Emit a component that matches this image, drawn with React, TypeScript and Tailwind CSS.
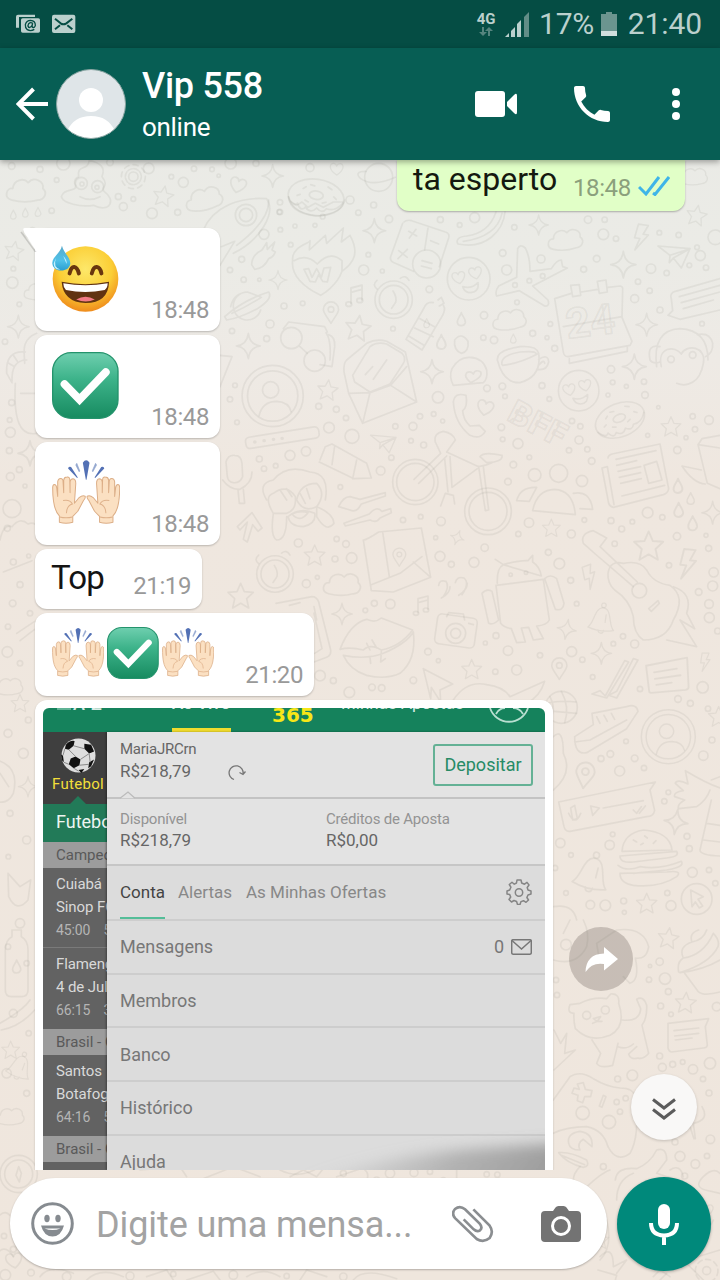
import React from "react";

type Spot = [number, number, number];
type Place = { x: number; y: number; s?: number; r?: number };

const at = ({ x, y, s = 1, r = 0 }: Place) => `translate(${x} ${y}) rotate(${r}) scale(${s})`;

const Star = (p: Place) => (
  <path transform={at(p)} d="M0-38 11-13 38-11 18 8 24 36 0 22-24 36-18 8-38-11-11-13Z" />
);
const Spark = (p: Place) => (
  <path transform={at(p)} d="M0-38Q4-4 36 0 4 4 0 38-4 4-36 0-4-4 0-38Z" />
);
const Cloud = (p: Place) => (
  <path transform={at(p)} d="M-38 26C-62 20-54-8-36-6-34-30-6-36 6-22 22-40 50-26 46-6 60 6 50 26 32 26 10 32-16 32-38 26Z" />
);
const Heart = (p: Place) => (
  <path transform={at(p)} d="M0 24C-34 2-26-22-10-20-2-19 0-10 0-10S4-20 14-19C30-16 28 6 0 24Z" />
);
const Drop = (p: Place) => <path transform={at(p)} d="M0-20C4-8 14 0 12 10 8 22-10 22-12 10-14 0-4-8 0-20Z" />;
const Bolt = (p: Place) => <path transform={at(p)} d="M-14-38H16L4-10H20L-14 40-4 4H-20Z" />;
const Pin = (p: Place) => (
  <g transform={at(p)}>
    <path d="M0 36C-14 12-24 4-24-8A24 24 0 0 1 24-8C24 4 12 14 0 36Z" />
    <circle cy="-8" r="9" />
  </g>
);
const Bell = (p: Place) => (
  <g transform={at(p)}>
    <circle cy="-56" r="9" />
    <path d="M-52 38C-28 20-36-46 0-46S28 20 52 38C20 48-20 48-52 38ZM-10 44C-8 60 12 60 12 43M14-20V10" />
  </g>
);
const Note = (p: Place) => (
  <g transform={at(p)}>
    <path d="M-10 22V-20L20-28V12M-10-8 20-16" />
    <ellipse cx="-16" cy="24" rx="8" ry="6" />
    <ellipse cx="14" cy="14" rx="8" ry="6" />
  </g>
);
const Plane = (p: Place) => <path transform={at(p)} d="M-48-28 48-20 22 38-2 8-14 22-12 0ZM-12 0 48-20-2 8" />;
const Smile = (p: Place) => (
  <g transform={at(p)}>
    <circle r="64" />
    <Heart x={-30} y={-4} s={0.8} r={-12} />
    <Heart x={20} y={-18} s={0.8} r={-12} />
    <path d="M-18 24Q8 32 28 12 32 40 6 42-12 42-18 24Z" />
  </g>
);
const Avatar = (p: Place) => (
  <g transform={at(p)}>
    <circle r="90" />
    <circle r="74" />
    <circle cx="-6" cy="-18" r="24" />
    <path d="M-40 58Q-30 16 12 16 48 18 54 46" />
  </g>
);
const Donut = (p: Place) => (
  <g transform={at(p)}>
    <ellipse rx="80" ry="52" />
    <path d="M-78 10Q-60 38-50 24-38 48-26 32-8 50 6 30 24 46 34 28 60 34 78 6M-40-20-32-26M-20-34-8-32M30-34 42-28M50-8 58-2M-54 2-46-2M-30 12-20 16M20 14 30 10" />
    <ellipse cy="-6" rx="20" ry="12" />
  </g>
);
const Clock = (p: Place) => (
  <g transform={at(p)}>
    <circle r="56" />
    <circle r="43" />
    <path d="M-2-26Q10-8 6 8L-6 26M20-64Q36-76 46-58M-50-32Q-66-44-50-58" />
  </g>
);
const Bubble = (p: Place) => (
  <g transform={at(p)}>
    <path d="M-58-28 54-50 58 30Q58 36 50 38L-44 46Q-50 46-50 38ZM-36-10 26-20M-34 8 36-2M-30 24 12 18" />
  </g>
);
const Dots = ({ list }: { list: Spot[] }) => (
  <>
    {list.map(([x, y, r], i) => (
      <circle key={i} cx={x} cy={y} r={r} />
    ))}
  </>
);

const headDots: Spot[] = [[35, 498, 10], [120, 508, 9], [190, 490, 20], [170, 540, 7], [330, 487, 10], [446, 505, 16], [514, 530, 7], [550, 547, 15], [582, 506, 8], [636, 508, 7], [656, 527, 5], [692, 490, 17], [768, 490, 9], [930, 503, 12], [355, 590, 9], [400, 597, 7], [456, 640, 16], [533, 637, 9], [370, 620, 12], [155, 632, 8], [840, 607, 8], [838, 636, 7], [968, 650, 7], [1050, 600, 12]];

const midDots: Spot[] = [[78, 45, 32], [78, 45, 20], [180, 36, 8], [132, 103, 15], [181, 89, 7], [225, 78, 6], [285, 76, 6], [415, 38, 8], [507, 57, 11], [461, 15, 9], [212, 134, 7], [65, 178, 9], [30, 210, 8], [71, 239, 8], [118, 239, 5], [445, 164, 7], [431, 210, 15], [487, 213, 6], [192, 318, 9], [248, 310, 7], [150, 372, 12], [140, 416, 9], [36, 393, 8], [519, 386, 7], [628, 268, 10], [661, 59, 9], [719, 75, 7], [764, 53, 15], [883, 82, 8], [848, 159, 10], [860, 210, 15], [963, 177, 12], [968, 228, 7], [928, 242, 7], [885, 255, 7], [891, 307, 7], [792, 346, 11], [991, 372, 7], [938, 400, 9], [981, 413, 6], [1004, 445, 9], [822, 420, 11], [790, 413, 8], [1104, 59, 11], [1154, 59, 8], [1150, 103, 16], [1188, 116, 8], [1130, 176, 10], [1091, 208, 9], [1293, 206, 14], [1254, 245, 8], [1289, 272, 8], [1244, 296, 12], [1318, 98, 7], [1376, 105, 8], [1431, 142, 7], [1441, 167, 15], [1408, 196, 7], [1340, 219, 8], [1458, 203, 8], [1320, 330, 9], [1446, 371, 7], [1486, 112, 22], [45, 556, 7], [30, 598, 8], [296, 619, 9], [349, 628, 9], [378, 654, 8], [51, 667, 7], [327, 683, 16], [526, 679, 8], [579, 679, 12], [654, 592, 17], [600, 649, 8], [641, 642, 7], [668, 663, 6], [801, 565, 10], [847, 559, 10], [855, 589, 7], [966, 557, 9], [988, 597, 7], [844, 682, 10], [848, 718, 7], [894, 731, 15], [880, 794, 10], [928, 772, 7], [864, 845, 10], [1047, 751, 8], [1077, 720, 12], [1102, 748, 8], [1115, 783, 10], [1056, 663, 8], [1081, 679, 8], [1173, 508, 11], [1178, 547, 7], [1219, 559, 6], [1272, 545, 8], [1275, 585, 10], [1164, 585, 6], [1315, 622, 5], [1418, 649, 8], [1467, 660, 13], [1425, 688, 8], [1398, 713, 6], [1372, 750, 11], [1283, 706, 6], [118, 777, 9], [132, 806, 8], [167, 797, 7], [210, 766, 15], [258, 754, 14], [482, 812, 13], [514, 773, 8], [573, 722, 7], [611, 735, 9], [361, 861, 7], [602, 950, 7], [549, 960, 8], [663, 964, 13], [647, 1013, 6], [927, 968, 14], [895, 1002, 8], [1054, 1002, 12], [1093, 960, 7], [1173, 962, 9], [1205, 987, 9], [1237, 965, 7], [1283, 938, 16], [1327, 952, 8], [1371, 1009, 11], [1458, 1006, 6], [1466, 1045, 9], [235, 1029, 12], [350, 1017, 8], [378, 1032, 10], [345, 1077, 9], [395, 1074, 16], [794, 1043, 11], [660, 1069, 15], [694, 1093, 9], [762, 1087, 15], [985, 1057, 9], [1018, 1091, 16], [1184, 1031, 8], [1347, 1096, 8], [1481, 1117, 14]];

const lowDots: Spot[] = [[259, 131, 12], [292, 112, 6], [511, 192, 14], [463, 190, 9], [436, 211, 7], [624, 335, 10], [655, 362, 6], [828, 287, 9], [796, 309, 6], [864, 332, 14], [960, 346, 8], [890, 390, 15], [826, 395, 8], [580, 421, 10], [388, 457, 16], [300, 407, 16], [340, 422, 9], [456, 442, 10], [485, 444, 10], [1070, 191, 7], [1052, 121, 9], [1209, 289, 8], [1244, 312, 12], [1180, 311, 7], [1055, 335, 15], [1087, 359, 8], [1118, 411, 7], [1436, 156, 10], [1478, 138, 15], [1467, 192, 13], [1468, 233, 15], [1493, 273, 9], [1448, 442, 17], [1260, 447, 8], [1374, 477, 10], [1411, 490, 9], [1464, 506, 8], [1218, 604, 7], [1244, 655, 10], [1171, 642, 10], [1143, 656, 9], [1199, 693, 15], [1272, 684, 8], [1476, 600, 9], [1450, 647, 14], [1345, 757, 7], [1333, 784, 8], [1401, 889, 9], [1408, 926, 9], [1178, 883, 7], [1169, 915, 14], [1021, 909, 14], [1053, 945, 7], [1005, 984, 8], [1417, 997, 15], [1467, 990, 8], [1342, 1059, 8], [1211, 1083, 9], [1156, 1096, 16], [1111, 1094, 13], [1353, 1097, 15], [1213, 1117, 6], [1038, 1059, 7], [1486, 1030, 8]];

const deepDots: Spot[] = [[1109, 95, 11], [1080, 108, 5], [1077, 149, 8], [1125, 146, 17], [1135, 185, 9], [1112, 228, 9], [1143, 253, 7], [1280, 230, 13], [801, 195, 8], [798, 150, 8], [1109, 378, 9], [1117, 412, 12], [1148, 403, 9], [1178, 396, 7], [1209, 418, 14], [1260, 400, 17], [1239, 447, 8], [1257, 489, 9], [1027, 436, 16], [983, 447, 9], [980, 516, 8], [1007, 505, 8], [990, 545, 8], [957, 576, 20], [878, 549, 20], [1261, 628, 13], [1155, 636, 9], [1170, 679, 15], [1216, 702, 13], [1251, 678, 8], [940, 710, 9], [1184, 738, 9], [590, 733, 8], [622, 734, 8], [160, 730, 9], [372, 728, 12]];

const leftDots: Spot[] = [[37, 188, 17], [58, 253, 7], [40, 146, 7], [15, 365, 8], [35, 548, 9], [29, 600, 7], [31, 637, 15], [28, 692, 9], [58, 749, 9], [31, 770, 12], [75, 798, 6], [22, 925, 9], [40, 1026, 9], [86, 1008, 6], [60, 1094, 9], [38, 1150, 10], [90, 1180, 8], [24, 1220, 8], [22, 1296, 16], [60, 1330, 8], [85, 1500, 9], [24, 1540, 12], [70, 1600, 15], [30, 1780, 9], [80, 1860, 12], [25, 1910, 7], [60, 2110, 14], [24, 2180, 8], [80, 2230, 8], [40, 2380, 12], [86, 2440, 8], [20, 2560, 14], [80, 2620, 9]];

const footDots: Spot[] = [[12, 228, 8], [40, 268, 9], [16, 345, 16], [93, 338, 10], [200, 350, 13], [390, 348, 12], [520, 342, 8], [700, 345, 13], [860, 348, 8], [1030, 350, 11], [1092, 245, 8], [1100, 290, 12], [1130, 60, 9], [1170, 40, 14], [1290, 35, 8], [1330, 60, 7], [1410, 210, 9], [1425, 120, 8], [1400, 265, 12]];

function Wallpaper() {
  return (
    <svg className="absolute inset-0" width="720" height="1280" viewBox="0 0 720 1280" fill="none" stroke="#87837b" strokeOpacity="0.115" strokeLinejoin="round" strokeLinecap="round">
      <g transform="scale(.33333)" strokeWidth="5">
        <Dots list={headDots} />
        <Cloud x={78} y={572} s={1.1} />
        <Cloud x={612} y={598} s={1.05} r={-12} />
        <g transform="translate(400 530)">
          <circle r="14" />
          <circle r="24" strokeDasharray="14 5" />
          <circle r="36" strokeDasharray="15 13" />
        </g>
        <path d="M236 530C230 490 264 516 268 480 300 490 318 500 306 530 330 560 300 560 312 574 350 600 330 640 280 616 240 622 190 610 184 590 190 560 240 580 224 550Q222 536 236 530ZM240 590Q270 606 300 590" />
        <circle cx="244" cy="550" r="18" />
        <circle cx="293" cy="560" r="18" />
        <circle cx="246" cy="552" r="6" />
        <circle cx="291" cy="562" r="6" />
        <Star x={490} y={588} s={0.8} r={10} />
        <Heart x={714} y={554} s={1} r={15} />
        <Heart x={1010} y={506} s={0.8} />
        <Spark x={818} y={528} s={0.9} />
        <Donut x={948} y={592} s={1.05} r={8} />
        <path d="M610 690C640 620 720 590 800 596 830 640 780 720 700 760" />
        <Drop x={40} y={644} s={0.7} />
        <Drop x={76} y={638} s={0.7} />
        <Drop x={114} y={636} s={0.7} />
        <circle cx="1136" cy="532" r="42" />
        <path d="M1098 514Q1060 514 1082 536 1120 562 1186 532" />
        <Cloud x={2080} y={530} s={0.8} />
      </g>

      <g transform="translate(0 220) scale(.33333)" strokeWidth="5">
        <Dots list={leftDots} />
        <Star x={42} y={92} s={0.75} r={10} />
        <Cloud x={115} y={215} s={0.8} />
        <Spark x={55} y={320} s={0.9} />
        <Heart x={90} y={40} s={0.8} r={-18} />
        <path d="M110 340C60 360 74 400 74 430M20 460Q16 390 76 396M36 484Q34 420 80 420M20 460 36 488M26 430 44 440M40 406 52 424M46 490C40 600 60 650 110 640M62 520H110" />
        <Spark x={90} y={700} s={1} />
        <circle cx="36" cy="866" r="27" />
        <path d="M0 960Q10 910 36 920 60 890 84 912 110 900 120 940" />
        <path d="M10 1056 96 1022M50 1240 104 1204M60 1262 104 1228" />
        <Cloud x={26} y={1400} s={0.8} />
        <Star x={60} y={1450} s={0.7} />
        <path d="M-10 1620Q60 1640 40 1720 20 1760-20 1740M0 1660 26 1700" />
        <Spark x={84} y={1700} s={0.8} />
        <path d="M24 1960 60 2000 92 1980 84 2040Q50 2080 26 2030Z" />
        <path d="M36 2150V2130H64V2150Q84 2160 84 2190V2310Q84 2330 64 2330H34Q16 2330 16 2310V2190Q16 2160 36 2150Z" />
        <Drop x={50} y={2240} s={1} />
        <Bell x={60} y={2540} s={0.7} r={20} />
        <Star x={32} y={2490} s={0.7} />
        <path d="M0 2410Q70 2370 90 2340M4 2430Q60 2420 104 2370" />
        <Cloud x={30} y={2690} s={0.8} />
      </g>

      <g transform="translate(220 200) scale(.33333)" strokeWidth="5">
        <Dots list={midDots} />
        <path d="M146 0Q150 60 50 136M206-10Q210 40 290 48 370 40 374 0M212 4 230 16 246 6 264 22 286 10 310 22 340 6 372 6" />
        <path d="M95 194Q96 164 126 150L140 128 142 148 164 126 156 150 166 156Q160 172 146 176 132 206 104 208Z" />
        <path d="M0 196 44 124 4 140M0 466 36 470 0 560" />
        <path d="M302 286Q210 240 218 180C214 140 270 130 270 122L268 150 316 106 320 130 370 84 364 126 390 106C420 160 400 190 366 214 350 260 302 286 302 286ZM222 182Q260 160 292 192 330 150 366 182V214M252 208 266 206 276 232 290 206 304 232 312 204 332 202M252 208 270 244 286 246 296 224 308 244 322 246 332 202" />
        <Spark x={463} y={92} s={0.95} />
        <Spark x={174} y={240} s={0.75} />
        <path d="M552 66Q560 58 575 62L676 96Q690 100 686 114L658 200M580 214 526 190Q508 184 512 170L548 70M566 94 590 108M588 88 568 114M536 152 562 172M562 148 534 176M632 122 656 132M624 84 614 150" />
        <circle cx="620" cy="192" r="42" />
        <path d="M606 182 636 190M604 198 634 206" />
        <path d="M855 36C850 90 800 150 714 132 706 120 716 110 740 108 800 100 820 60 828 36M846 40Q830 110 730 124" />
        <Smile x={746} y={236} />
        <path d="M893 146Q900 130 916 144 930 170 930 214L994 206Q1010 180 1024 180L1028 200 1042 204 938 258 984 300Q990 320 974 318L898 272 830 288Q824 274 836 258L890 232Z" />
        <Cloud x={1036} y={120} s={0.98} r={-4} />
        <Cloud x={868} y={360} s={0.95} r={-6} />
        <Spark x={956} y={75} s={0.8} />
        <Spark x={1210} y={194} s={1.05} />
        <Bolt x={1264} y={112} r={8} />
        <Plane x={1362} y={166} />
        <Star x={1430} y={46} s={0.8} r={10} />
        <path d="M1500 236 1366 274Q1348 280 1354 296L1358 332 1344 346 1380 358 1500 330M1378 290 1500 256M1384 308 1500 276M1390 326 1480 300" />
        <path d="M82 276A42 42 0 1 0 122 330M32 320Q40 280 82 276L120 290M14 350Q70 300 146 276 160 296 112 326 60 354 20 360ZM36 340Q80 320 124 292" />
        <Note x={404} y={286} s={1.1} />
        <Pin x={333} y={336} s={0.95} />
        <Clock x={521} y={299} />
        <path d="M654 300 664 292 672 310 658 318M640 308Q620 304 612 324L558 418 606 450 662 356Q680 330 670 316M584 384 640 410M600 356 646 382M566 408 612 436" />
        <Drop x={620} y={370} s={0.7} />
        <Drop x={724} y={358} s={1} />
        <Drop x={664} y={426} s={1.1} />
        <Drop x={880} y={416} s={0.7} />
        <path d="M704 420Q724 394 744 424 748 454 724 460 700 450 704 420Z" />
        <circle cx="214" cy="414" r="32" />
        <circle cx="284" cy="482" r="32" />
        <path d="M240 440 262 460M190 386 206 366 314 380 322 396M326 404Q346 410 344 440L336 500 300 494M318 398Q334 420 330 480" />
        <Star x={414} y={384} r={8} />
        <Spark x={85} y={438} s={1} />
        <path d="M372 516Q370 490 380 480L440 430Q470 414 500 424L556 456 590 606 428 670 386 580ZM386 580 450 578 428 670M450 578 512 556 590 606M512 556 560 500M398 526 450 440Q470 424 500 432L546 460Q560 474 550 490L510 552 450 576 404 546ZM436 524 458 500M460 538 500 480" />
        <Spark x={636} y={515} s={0.95} />
        <path d="M700 556Q686 530 696 506 716 470 750 472 790 474 800 510 804 536 790 548ZM752 548Q730 530 740 518 752 512 760 522 766 506 782 516 790 530 752 548Z" />
        <path d="M832 480Q830 450 900 440 950 436 956 460 966 530 900 548 850 550 832 480ZM846 494Q840 466 900 456 950 452 948 462M848 496Q900 490 952 462M956 478Q984 460 986 486 980 514 950 508M958 494Q972 476 974 490" />
        <path d="M1004 296 1054 280M1084 276 1134 268M1164 262 1200 258Q1210 260 1208 270L1206 352 1236 424 1230 436 1044 470Q1032 470 1030 456L1004 296M1052 256 1078 254 1082 286 1058 290ZM1132 244 1158 240 1162 276 1138 280ZM1048 476V490L1222 454V438M1030 380 1206 350" />
        <text x="1042" y="416" fontFamily="Roboto, sans-serif" fontWeight="700" fontSize="126" textLength="148" lengthAdjust="spacingAndGlyphs" transform="rotate(-7 1042 412)">24</text>
        <Spark x={1280} y={374} s={0.9} />
        <Spark x={1243} y={500} s={1} />
        <path d="M1310 500Q1296 390 1380 386 1464 390 1464 480M1320 440Q1280 430 1290 480 1300 494 1320 486M1432 404Q1470 396 1478 430 1480 460 1456 470M1324 500C1310 440 1366 436 1384 462 1400 430 1460 440 1450 490 1440 550 1400 562 1370 550 1330 540 1324 500ZM1362 510 1390 540M1376 500 1400 530M1390 500 1412 520M1310 500 1350 580M1466 480Q1470 530 1440 560M1350 570Q1380 570 1394 600 1370 620 1350 606ZM1420 560Q1450 540 1464 580 1450 610 1420 596Z" />
        <circle cx="1353" cy="478" r="10" />
        <circle cx="1418" cy="465" r="10" />
        <Avatar x={158} y={588} s={1.02} />
        <Star x={323} y={570} s={0.8} r={6} />
        <path d="M700 606Q704 576 738 586 744 620 728 632 730 660 750 678L778 676 796 694Q780 720 750 706 704 670 700 606Z" />
        <Heart x={796} y={622} s={1} r={12} />
        <g transform="rotate(28 862 650)" fontFamily="Roboto, sans-serif" fontWeight="900" fontSize="100">
          <text x="862" y="660" textLength="180" lengthAdjust="spacing">BFF</text>
        </g>
        <Smile x={1076} y={572} s={0.95} />
        <Donut x={1200} y={660} r={-22} s={0.96} />
        <Star x={1353} y={680} s={0.78} />
        <rect x="76" y="696" width="222" height="34" rx="12" transform="rotate(-9 187 713)" />
        <path d="M104 726H105M132 722H133M160 718H161M186 715H187" strokeWidth="10" />
        <path d="M300 780 316 740 336 732 440 790 454 834 402 836 298 786M344 738 336 794M410 780 398 836" />
        <circle cx="396" cy="709" r="21" />
        <Plane x={490} y={728} s={0.8} />
        <path d="M140 900Q110 850 160 840 200 790 270 816 330 820 316 900M160 940Q130 890 160 880 200 850 226 890 230 930 200 940ZM230 900Q240 850 290 850 320 880 290 920 250 940 230 900ZM200 900 180 870M216 890 200 866M240 880 256 910M260 866 270 896M160 940Q150 1010 170 1020 200 1020 200 950M290 920Q340 940 342 970 320 1000 290 950ZM204 950Q210 980 250 980 290 970 284 940 240 920 204 950ZM216 942Q240 930 264 938 240 970 216 942Z" />
        <path d="M18 786Q24 764 44 766 64 766 66 790L68 830Q60 850 40 848 24 846 22 830ZM8 840Q30 870 60 868 96 850 96 816M54 870 58 910 74 910 70 868" />
        <path d="M52 980 96 938 126 984 114 994 98 974 82 1026 70 1018 82 966 60 990Z" />
        <path d="M356 920Q370 890 390 890L420 898 496 878V888L424 912Q410 940 390 930ZM372 970 448 942Q470 916 486 934L512 926 514 938 480 954Q470 970 450 960L376 978Z" />
        <circle cx="586" cy="846" r="68" />
        <circle cx="586" cy="846" r="56" />
        <circle cx="804" cy="934" r="70" />
        <circle cx="804" cy="934" r="57" />
        <path d="M582 838 662 760 646 726Q640 700 670 694 700 700 706 720L680 756M596 850 680 768M680 756 776 800M690 770 696 862 772 806M674 776 684 876M776 800 796 932 806 930 790 800M776 800Q800 796 816 788M780 770Q790 754 846 766 850 786 800 788ZM662 918 676 880 700 886 704 912" />
        <circle cx="944" cy="825" r="19" />
        <circle cx="1016" cy="820" r="27" />
        <circle cx="1086" cy="843" r="17" />
        <path d="M938 932Q950 870 1004 868 1060 872 1066 944ZM890 902Q900 860 950 862L928 904ZM1060 880Q1110 870 1118 928L1080 926" />
        <path d="M1164 774Q1164 766 1176 762L1320 732 1346 866Q1344 880 1330 884L1180 922Q1170 920 1166 910L1146 804 1162 800 1182 914M1188 778 1308 752M1190 796 1250 782M1194 814 1262 800M1198 832 1262 818M1202 850 1264 836M1206 888 1334 856M1272 796 1310 784 1326 840 1286 850Z" />
        <path d="M1500 706 1446 716 1434 734 1462 850 1500 866M1434 734 1500 744M1444 810 1386 798Q1420 850 1456 852" />
        <Drop x={1374} y={858} s={1.1} />
        <Drop x={1412} y={896} s={0.9} />
        <Drop x={1376} y={930} s={1.1} />
        <Drop x={1418} y={970} s={1.1} />
        <Spark x={1478} y={938} s={0.9} />
        <Spark x={712} y={1013} s={0.6} r={20} />
        <Star x={994} y={984} s={0.7} />
        <Star x={1286} y={1038} s={1.15} />
        <Star x={284} y={1066} s={0.82} />
        <Bolt x={1404} y={1092} s={1.15} r={6} />
      </g>

      <g transform="translate(220 540) scale(.33333)" strokeWidth="5">
        <Dots list={lowDots} />
        <Clock x={165} y={102} s={0.98} />
        <path d="M430 0Q440 0 476-24L604-36 632 112 520 156 454 152 430 0M488-24 508 110M580 66 632 112M454 134 540 100 606 50" />
        <Pin x={538} y={50} s={0.8} />
        <Cloud x={366} y={134} s={1.05} />
        <Star x={62} y={168} s={1} />
        <Spark x={366} y={222} s={0.85} />
        <Note x={604} y={196} s={1} />
        <path d="M656 136Q658 118 678 124 690 140 670 170M664 174Q690 160 690 140M706 128Q710 108 732 114 750 130 726 164M716 166Q742 150 742 130" />
        <path d="M168 190 276 170Q290 170 296 186L332 330Q334 346 320 352L282 366M282 200 290 240M208 196 240 188M282 220 306 326 284 340" />
        <path d="M360 328Q390 250 440 238 466 250 484 234L578 270Q540 320 484 330 450 310 430 330 390 320 360 328ZM370 346Q440 360 490 340 560 310 580 276 590 360 540 400 500 420 440 406 390 390 370 346ZM440 310 450 330M456 300 470 324M484 334 482 366 496 356M450 352 452 370" />
        <rect x="648" y="228" width="120" height="90" rx="14" transform="rotate(8 708 272)" />
        <circle cx="707" cy="280" r="30" />
        <circle cx="707" cy="280" r="15" />
        <path d="M680 230 686 218 730 222 734 240M746 250 760 254" />
        <path d="M832 130Q830 84 850 74L826 58M850 74Q900 60 924 62L938 46V66Q960 80 964 108ZM828 136 970 118 988 240Q980 256 950 258L970 296 940 300 926 262 904 264 916 306 890 308 874 266Q850 262 842 250ZM786 160Q800 144 816 154L836 240Q820 256 806 250ZM974 116Q990 100 1010 116L1032 190Q1030 214 1006 208Z" />
        <circle cx="872" cy="104" r="5" />
        <circle cx="918" cy="98" r="5" />
        <path d="M1090 10 1126 42 1240 140M1140 20 1252 126M1090 10Q1080-20 1120-28L1160-6 1140 20M1164 100Q1170 60 1210 70 1260 60 1280 90 1300 130 1350 136 1400 170 1360 240 1340 300 1270 300 1240 280 1240 230 1230 180 1184 150 1162 130 1164 100ZM1360 140Q1420 160 1400 220L1424 266 1380 240 1430 320 1340 300M1286 206 1314 182 1318 190 1294 214Z" />
        <circle cx="1258" cy="152" r="22" />
        <Bolt x={1110} y={110} s={0.9} r={-20} />
        <Bell x={1146} y={238} s={0.75} r={8} />
        <Spark x={1040} y={268} s={0.8} r={10} />
        <Spark x={1144} y={340} s={0.85} />
        <Pin x={1018} y={384} s={0.95} />
        <Star x={755} y={388} s={0.78} />
        <path d="M1116 462 1140 452 1156 468 1214 362 1226 366 1160 474ZM1166 466 1190 454 1240 356 1254 360 1190 474Z" />
        <Bubble x={1342} y={408} s={1.1} />
        <Bolt x={1456} y={366} s={0.7} />
        <path d="M610 386 698 432 660 450 662 486 634 442 632 476ZM700 480Q740 420 800 434 850 440 870 470L974 424Q960 470 920 490" />
        <circle cx="1024" cy="502" r="48" />
        <path d="M978 490Q1024 480 1068 486M990 470Q1010 510 990 534M1024 454Q1050 500 1034 548M978 512 1070 520" />
        <path d="M1064 590 1120 554 1116 520 1220 500Q1250 490 1254 514L1220 566 1100 638Q1064 646 1064 590ZM1064 606 1110 600 1220 540M1130 530 1140 550M1152 526 1162 544M1174 520 1184 538" />
        <Avatar x={1345} y={590} s={0.9} />
        <Star x={1496} y={530} s={0.8} />
        <Pin x={1095} y={704} s={1.15} r={8} />
        <path d="M1000 590Q1030 560 1030 640 1060 700 1000 750M1016 786 1306 726 1290 750 1304 812Q1300 830 1280 830L1050 874Q1036 876 1032 860ZM1052 804 1064 796 1072 836 1058 840ZM1046 820Q1066 860 1082 820M1112 798 1138 804 1118 826ZM1150 804 1270 782M1240 810 1250 820 1264 800M1258 820 1276 798" />
        <path d="M1500 744Q1460 730 1396 692L1404 732Q1370 716 1366 730L1390 752Q1360 756 1364 770L1394 780Q1370 794 1376 806L1430 800Q1460 780 1470 750M1474 720 1500 710M1474 780 1440 930Q1440 946 1500 948M1460 850 1500 856M1450 900 1500 906" />
        <Spark x={1368} y={846} s={1} r={8} />
        <Bell x={1116} y={1000} s={1} r={14} />
        <path d="M1206 934Q1210 880 1270 870 1350 876 1356 930ZM1200 948 1370 934Q1380 950 1340 954L1240 966Q1200 970 1200 948ZM1194 976Q1220 996 1260 980 1320 990 1384 964 1396 980 1340 990L1240 1000M1200 1000Q1200 1030 1240 1036 1320 1044 1370 1010 1390 990 1340 996ZM1240 900 1250 906M1274 888 1282 894M1300 910 1308 902M1262 914 1270 910" />
        <circle cx="1430" cy="1077" r="46" />
        <path d="M1412 1050 1450 1070 1434 1078 1448 1098 1438 1104 1426 1086 1416 1100Z" />
        <Star x={1280} y={1090} s={0.8} />
        <path d="M1000 1100Q1060 1090 1070 1140" />
      </g>

      <g transform="translate(290 930) scale(.33333)" strokeWidth="5">
        <Dots list={deepDots} />
        <path d="M790 90Q860 110 890 50 900 10 880-30M820 10 840-30M930 100 920 40 980 0Q1060-10 1076 50 1070 90 1036 84 1050 150 1020 160L1000 140" />
        <circle cx="828" cy="44" r="16" />
        <Star x={1135} y={24} s={0.82} r={8} />
        <path d="M1166 126Q1160 96 1180 84 1164 50 1206 36 1196 10 1226 0M1180 84Q1240 76 1270 10M1206 36Q1240 30 1250 0M1270 10Q1290 30 1284 50 1260 100 1170 128 1240 120 1290 90M1184 130 1224 184Q1240 200 1290 186" />
        <path d="M840 224 870 220Q910 200 950 206L962 192Q990 190 986 220 1010 290 960 316 900 340 856 296 850 270 852 250 830 250 840 224ZM996 270Q1050 276 1052 236L1040 208Q1060 196 1070 226 1072 264 1056 286L1076 370Q1060 390 1044 384 1020 390 1016 372L1040 350M906 330 932 370 920 400Q930 416 968 406L984 340M984 350Q1010 360 1030 342M910 266 932 260 922 274ZM922 274 908 280M922 274 936 274" />
        <circle cx="890" cy="256" r="12" />
        <circle cx="946" cy="240" r="12" />
        <Star x={1187} y={218} s={0.82} r={4} />
        <path d="M1134 280 1256 266 1246 290 1252 346Q1250 354 1240 354L1144 366Q1136 364 1134 354ZM1152 302 1226 294M1154 318 1226 310M1156 330 1206 324" />
        <path d="M792 300 812 340 830 310 824 370 856 360 792 420M790 510 840 440Q870 420 910 446 950 470 990 474 1030 474 1036 500 1050 620 1020 670 980 700 954 650 940 600 890 590 830 590 790 610" />
        <path d="M862 462 880 458 886 478 906 482 902 500 884 500 878 518 862 512 864 496 846 490 852 474 868 478ZM928 528 940 496 948 500 936 532ZM836 640Q830 610 870 604 910 610 906 650L880 628Q860 640 870 660 840 660 836 640ZM806 668Q840 664 890 690 900 710 880 712 830 700 806 668ZM814 676 884 704M976 750Q980 710 1040 716 1080 700 1100 660 1130 650 1130 690L1100 730 1160 750" />
        <path d="M1236 530Q1260 570 1210 580L1216 626M1200 590 1212 626M0 740 40 720 80 740 100 716M220 716Q240 730 230 750M500 716V750" />
      </g>

      <g transform="translate(0 1160) scale(.33333)" strokeWidth="5">
        <Dots list={footDots} />
        <circle cx="56" cy="42" r="56" />
        <circle cx="56" cy="42" r="42" />
        <path d="M48 46 56 20 64 40 58 66ZM0 165Q16 150 30 166M-20 300Q10 240 40 290" />
        <Heart x={42} y={300} s={1} r={-10} />
        <path d="M120 350Q150 310 220 340M260 360Q300 320 370 350M440 350 500 330 520 360M560 360 640 334 660 360M740 350Q790 320 840 350M900 360 920 330 980 350M1060 360Q1090 320 1190 356M420 30 540 20 560 50M600 60 700 20 780 50M840 30Q900 60 960 20M1010 50 1100 20" />
        <path d="M1740 20Q1700 60 1740 100 1800 40 1830 30M1850 120Q1850 60 1900 40M2010 30Q2040 10 2050 50M2116 90Q2080 80 2110 50 2140 20 2160 40M2116 90 2160 100" />
        <path d="M2060 300 2160 270M2070 200Q2120 230 2140 180M2050 300 2090 340 2110 360M1820 180Q1840 260 1800 300M1960 350 1980 330 2010 350" />
        <path d="M1794 330 1850 346 1846 360M1800 290Q1840 250 1840 320L1880 300 1850 340M1980 360 2000 340" />
        <g transform="translate(2120 332)">
          <circle r="12" />
          <circle r="34" strokeDasharray="15 11" />
        </g>
        <Star x={1800} y={240} s={0.7} />
        <Heart x={2120} y={150} s={0.8} />
      </g>
    </svg>
  );
}

function SweatFace() {
  return (
    <svg className="ml-px block shrink-0" width="67" height="68" viewBox="156 75 202 204">
      <defs>
        <radialGradient id="face" cx=".5" cy=".35" r=".65">
          <stop offset="0" stopColor="#fde86a" />
          <stop offset=".62" stopColor="#fbce35" />
          <stop offset="1" stopColor="#ef8b1c" />
        </radialGradient>
        <linearGradient id="sweat" x1="0" y1="0" x2="0" y2="1">
          <stop offset="0" stopColor="#58a9ca" />
          <stop offset=".6" stopColor="#4fc1e8" />
          <stop offset="1" stopColor="#2b9ed0" />
        </linearGradient>
      </defs>
      <circle cx="257" cy="177" r="99" fill="url(#face)" />
      <path d="M209 160Q214 140 223 141T237 160M276 160Q281 140 291 141T305 160" fill="none" stroke="#69360f" strokeWidth="12" strokeLinecap="round" />
      <path d="M185 185Q256 200 328 185 326 249 257 249 190 247 185 185Z" fill="#613311" />
      <path d="M190 190Q256 202 324 190 323 205 315 210 256 222 198 210 190 203 190 190Z" fill="#fff" />
      <path d="M229 239Q257 222 285 239 258 251 229 239Z" fill="#f37b86" />
      <path d="M186 77C192 101 213 112 211 132 207 159 160 158 157 130 156 110 182 99 186 77Z" fill="url(#sweat)" />
      <path d="M168 114Q158 143 181 148 162 151 161 130ZM190 108Q202 120 200 132Z" fill="#c5f1ff" />
    </svg>
  );
}

function CheckEmoji({ size }: { size: number }) {
  return (
    <svg className="block shrink-0" width={size} height={size} viewBox="156 395 202 202">
      <defs>
        <linearGradient id="check" x1="0" y1="0" x2="0" y2="1">
          <stop offset="0" stopColor="#6fcfaf" />
          <stop offset=".4" stopColor="#3db38a" />
          <stop offset="1" stopColor="#178b60" />
        </linearGradient>
      </defs>
      <rect x="158" y="397" width="197" height="198" rx="56" fill="url(#check)" stroke="#24936c" strokeWidth="4" />
      <path d="M194 492 239 538 318 456" fill="none" stroke="#fff" strokeWidth="24" strokeLinecap="round" strokeLinejoin="miter" />
    </svg>
  );
}

function Hand() {
  return (
    <>
      <path d="M177 903V884C161 868 157 840 157 800Q157 790 162 790 168 790 169 800L172 826 172 782Q173 772 181 772 188 772 188 782L190 815 190 777Q191 768 200 768 208 767 208 777L209 815 209 783Q210 773 218 773 226 774 226 787L222 846 236 829Q246 821 254 825 256 830 249 838L232 870 217 885V903Q197 909 177 903Z" fill="#fbe0c2" stroke="#dcae87" strokeWidth="3" strokeLinejoin="round" />
      <path d="M188 838Q208 834 216 848 199 852 198 876M178 887Q197 892 216 887" fill="none" stroke="#dfb28c" strokeWidth="3" />
    </>
  );
}

function HandsEmoji({ size }: { size: number }) {
  return (
    <svg className="block shrink-0" width={size} height={size} viewBox="155 714 203 203">
      <Hand />
      <g transform="translate(514 0) scale(-1 1)">
        <Hand />
      </g>
      <path d="M247 725Q257 711 267 725L258 776H256ZM203 742Q204 735 212 738L232 769 230 771ZM311 742Q310 735 302 738L282 769 284 771Z" fill="#5371b5" />
      <path d="M226 732 229 727 238 750 236 752ZM288 732 285 727 275 750 277 752Z" fill="#93a7cf" stroke="#93a7cf" strokeWidth="2" />
    </svg>
  );
}

function StatusBar() {
  return (
    <div className="flex h-12 shrink-0 items-center bg-[#054d44] pl-4 pr-[18px] text-[#bbd0cd]">
      <svg width="60" height="20" viewBox="48 40 180 60">
        <path d="M48 81V48Q48 42 54 42H105V49H57V81Z" fill="#bbd0cd" />
        <rect x="63" y="53" width="57" height="43" rx="5" fill="#bbd0cd" />
        <path d="M103 86Q92 93 82 87 75 81 76 72 79 59 92 59 106 60 106 74 104 82 98 80 95 78 98 67M97 73Q93 82 86 80 82 75 86 69 92 63 98 68" fill="none" stroke="#054d44" strokeWidth="4" />
        <rect x="156" y="42" width="70" height="55" rx="6" fill="#bbd0cd" />
        <path d="M165 54 182 68Q190 74 199 68L217 54M165 86 180 74M217 86 202 74" fill="none" stroke="#054d44" strokeWidth="6" />
      </svg>
      <div className="ml-[400px] flex w-5 flex-col items-center">
        <span className="text-[15px] font-bold leading-[15px] tracking-[-0.2px]">4G</span>
        <svg width="14" height="9" viewBox="0 0 14 9" fill="#55847e">
          <path d="M3 0H5V5H8L4 9 0 5H3ZM9 9H11V4H14L10 0 6 4H9Z" />
        </svg>
      </div>
      <svg className="ml-[8px]" width="26" height="26" viewBox="0 0 26 26">
        <path d="M1 26 5 22V26ZM7 20 11 16V26H7ZM13 13 17 9V26H13Z" fill="#bbd0cd" />
        <path d="M20 6 25 1V26H20Z" fill="#628d87" />
      </svg>
      <span className="ml-[9px] w-[56px] whitespace-nowrap text-[30px] leading-[30px] tracking-[-0.2px]">17%</span>
      <svg className="ml-[6px] -mt-px" width="16" height="24" viewBox="0 0 16 24">
        <path d="M5 0H11V2H16V19H0V2H5Z" fill="#6b958f" />
        <path d="M0 19H16V24H0Z" fill="#d0dfdd" />
      </svg>
      <span className="ml-auto text-[30px] leading-[30px] tracking-[-0.1px]">21:40</span>
    </div>
  );
}

function AppBar() {
  return (
    <div className="relative z-10 flex h-28 shrink-0 bg-[#075e54] text-white shadow-[0_2px_6px_rgba(0,0,0,0.35)]">
      <svg className="ml-4 mt-[39px]" width="32" height="34" viewBox="0 0 32 34" fill="none" stroke="#fff" strokeWidth="4">
        <path d="M32 17H3M17.500 2 2.500 17 17.500 32" />
      </svg>
      <svg className="ml-2 mt-[21px]" width="70" height="70" viewBox="0 0 70 70">
        <defs>
          <clipPath id="avatar">
            <circle cx="35" cy="35" r="34.500" />
          </clipPath>
        </defs>
        <g clipPath="url(#avatar)">
          <path fill="#dfe5e8" d="M0 0H70V70H0Z" />
          <circle cx="35" cy="31" r="12" fill="#fff" />
          <path d="M11 62Q18 47 35 47T59 62L50 72H20Z" fill="#fff" />
        </g>
        <circle cx="35" cy="35" r="34.500" fill="none" stroke="#8aa5a2" strokeWidth="1" />
      </svg>
      <div className="ml-4 mt-5 flex flex-col gap-[10px] whitespace-nowrap">
        <span className="text-[36px] font-medium leading-[36px] tracking-[-0.3px]">Vip 558</span>
        <span className="text-[26px] leading-[26px] tracking-[-0.3px]">online</span>
      </div>
      <div className="ml-auto mr-10 flex items-center">
        <svg width="42" height="26" viewBox="0 0 42 26" fill="#fff">
          <rect width="30" height="26" rx="3" />
          <path d="M32 11 39 4Q42 1 42 5V21Q42 25 39 22L32 15Z" />
        </svg>
        <svg className="ml-[57px]" width="36" height="36" viewBox="3 3 18 18" fill="#fff">
          <path d="M6.620 10.790c1.440 2.830 3.760 5.140 6.590 6.590l2.200-2.200c.27-.27.67-.36 1.020-.24 1.120.37 2.330.57 3.570.57.55 0 1 .45 1 1V20c0 .55-.45 1-1 1-9.390 0-17-7.610-17-17 0-.55.45-1 1-1h3.500c.55 0 1 .45 1 1 0 1.250.2 2.450.57 3.570.11.35.03.74-.25 1.020z" />
        </svg>
        <svg className="ml-[62px]" width="8" height="32" viewBox="0 0 8 32" fill="#fff">
          <circle cx="4" cy="4" r="4" />
          <circle cx="4" cy="16" r="4" />
          <circle cx="4" cy="28" r="4" />
        </svg>
      </div>
    </div>
  );
}

const bubbleBase = "relative flex rounded-[12px] bg-white pl-4 pr-[11px] shadow-[0_1px_2px_rgba(0,0,0,0.22)]";
const timeBase = "text-[24px] leading-[24px] tracking-[-0.4px]";

function EmojiMessage({ children, time, tail = false }: { children: React.ReactNode; time: string; tail?: boolean }) {
  return (
    <div className={`${bubbleBase} h-[103px] w-[185px] justify-between pt-[17px]`}>
      {tail && (
        <svg className="absolute -left-4 top-0" width="28" height="24" viewBox="0 0 28 24">
          <path d="M2 4 17 24.500" stroke="#000" strokeOpacity=".15" strokeWidth="1.500" fill="none" />
          <path d="M6 0H28V12L17 23 5 4Q3 0 6 0Z" fill="#fff" />
        </svg>
      )}
      {children}
      <span className={`${timeBase} self-end pb-[9px] text-[#999]`}>{time}</span>
    </div>
  );
}

type Match = { home: string; away: string; clock: string; score: string };

function MatchBlock({ m, first = false }: { m: Match; first?: boolean }) {
  return (
    <div className={`flex shrink-0 flex-col whitespace-nowrap bg-[#626262] pl-[13px] text-[15px] tracking-[-0.1px] text-[#d9d9d9] ${first ? "h-[80px] border-b border-[#7a7a7a] pt-[5px]" : "h-[81px] pt-[5px]"}`}>
      <span className="h-[23px] leading-[23px]">{m.home}</span>
      <span className="h-[23px] leading-[23px]">{m.away}</span>
      <span className="h-[22px] text-[14px] leading-[22px] text-[#b5b5b5]">
        {m.clock}
        <span className="ml-[13px]">{m.score}</span>
      </span>
    </div>
  );
}

function LeagueRow({ name }: { name: string }) {
  return <div className="h-[26px] shrink-0 whitespace-nowrap bg-[#9c9c9c] pl-[13px] text-[15px] leading-[26px] text-[#595959]">{name}</div>;
}

function SportColumn() {
  return (
    <div className="flex w-16 shrink-0 flex-col overflow-hidden bg-[#626262]">
      <div className="relative flex h-[72px] shrink-0 flex-col items-center bg-[#3f3f3f] pt-[6px]">
        <svg className="ml-[7px]" width="35" height="35" viewBox="0 0 36 36">
          <circle cx="18" cy="18" r="17.500" fill="#dedede" />
          <path d="M10 21 15 19 20 22 19 28 13 31 8 27ZM5 7Q9 2 14 3L13 8 8 12 4 11ZM24 6 31 7 34 14 29 16 24 11ZM0 17 2 18 3 25 1 23ZM29 25 34 22 31 29 28 31ZM18 33 24 32 21 36Z" fill="#111" />
          <path d="M13 8 24 11M8 12 15 19M29 16 20 22M29 16 30 25M4 11 2 18M8 27 3 25M19 28 29 27M13 31 18 34" fill="none" stroke="#888" strokeWidth="1" />
        </svg>
        <span className="mt-[4px] ml-[6px] whitespace-nowrap text-[15px] leading-[15px] tracking-[0.3px] text-[#f3df3a]">Futebol</span>
        <svg className="absolute bottom-0 left-[27px]" width="16" height="8" viewBox="0 0 16 8" fill="#227a58">
          <path d="M0 8 8 0 16 8Z" />
        </svg>
      </div>
      <div className="h-[38px] shrink-0 whitespace-nowrap bg-[#227a58] pl-[13px] text-[18px] leading-[35px] text-[#eef5f2]">Futebol</div>
      <LeagueRow name="Campeonato" />
      <MatchBlock first m={{ home: "Cuiabá", away: "Sinop FC", clock: "45:00", score: "5" }} />
      <MatchBlock m={{ home: "Flamengo", away: "4 de Julho", clock: "66:15", score: "3" }} />
      <LeagueRow name="Brasil - Copa" />
      <MatchBlock m={{ home: "Santos", away: "Botafogo", clock: "64:16", score: "5" }} />
      <LeagueRow name="Brasil - Copa" />
    </div>
  );
}

const menu = ["Mensagens", "Membros", "Banco", "Histórico", "Ajuda"];

function AccountPanel() {
  return (
    <div className="relative flex min-w-0 flex-1 flex-col overflow-y-clip bg-[#dcdcdc] text-[17px] text-[#666] shadow-[-1px_0_2px_rgba(0,0,0,0.35)]">
      <div className="relative flex h-[67px] shrink-0 border-b-2 border-[#c3c3c3] bg-[#e3e3e3] pl-[13px] pr-3">
        <div className="flex flex-col whitespace-nowrap pt-[10px]">
          <span className="text-[15px] leading-[15px] tracking-[-0.25px]">MariaJRCrn</span>
          <span className="mt-[6px] leading-[17px]">R$218,79</span>
        </div>
        <svg className="ml-[32px] mt-[32px]" width="18" height="18" viewBox="0 0 18 18" fill="none" stroke="#777" strokeWidth="1.300">
          <path d="M6 15.500A7 7 0 1 1 15 10M11.500 8.500 15 10.500 17.500 7.500" />
        </svg>
        <div className="ml-auto mt-[12px] flex h-[42px] w-[100px] items-center justify-center rounded-[3px] border-2 border-[#64b195] pb-px text-[18px] text-[#278b66]">Depositar</div>
        <svg className="absolute -bottom-[2px] left-[13px]" width="16" height="8" viewBox="0 0 16 8" fill="#e3e3e3" stroke="#bbb" strokeWidth="1.300">
          <path d="M0 7.300 8 1 15 7.300" />
        </svg>
      </div>
      <div className="grid h-[67px] shrink-0 grid-cols-[206px_1fr] border-b-2 border-[#c6c6c6] bg-[#e3e3e3] pl-[13px] pt-[13px]">
        {[
          ["Disponível", "R$218,79"],
          ["Créditos de Aposta", "R$0,00"],
        ].map(([label, value]) => (
          <div key={label} className="flex flex-col whitespace-nowrap">
            <span className="text-[15px] leading-[15px] tracking-[-0.2px] text-[#939393]">{label}</span>
            <span className="mt-[5px] leading-[17px]">{value}</span>
          </div>
        ))}
      </div>
      <div className="flex h-[55px] shrink-0 whitespace-nowrap border-b-2 border-[#cdcdcd] pl-[13px] pr-[13px] leading-[52px]">
        <span className="relative h-[53px] text-[#444]">
          Conta
          <span className="absolute bottom-0 left-0 h-[2px] w-full bg-[#54bd98]" />
        </span>
        <span className="ml-[13px] text-[#888]">Alertas</span>
        <span className="ml-[14px] text-[#888]">As Minhas Ofertas</span>
        <svg className="ml-auto mt-[13px]" width="26" height="26" viewBox="0 0 26 26" fill="none" stroke="#858585" strokeWidth="1.500" strokeLinejoin="round">
          <path d="M11 1H15L15.700 4 18.500 5.200 21 3.400 23 6 21.200 8.500 22 11 25 12V15L22 16 20.900 18.500 22.500 21 20 23.300 17.500 21.700 15 22.600 14 25.500H11.500L10.600 22.500 8 21.500 5.500 23 3 20.500 4.700 18 3.700 15.600 1 15V12L3.700 11 4.900 8.200 3.300 5.500 6 3.200 8.300 5.200 10.500 4Z" />
          <circle cx="13" cy="13.500" r="3.700" />
        </svg>
      </div>
      {menu.map((item, i) => (
        <div key={item} className="flex h-[53.7px] shrink-0 items-center border-b-2 border-[#cdcdcd] pl-[13px] pr-[13px] text-[18px] text-[#777]">
          <span>{item}</span>
          {i === 0 && (
            <span className="ml-auto flex items-center gap-[7px]">
              0
              <svg width="21" height="16" viewBox="0 0 21 16" fill="none" stroke="#777" strokeWidth="1.500">
                <rect x=".7" y=".7" width="19.600" height="14.500" rx="1.500" />
                <path d="M1 1.500 10.500 10 20 1.500" />
              </svg>
            </span>
          )}
        </div>
      ))}
      <svg className="absolute bottom-0 right-0" width="240" height="50" viewBox="0 0 240 50">
        <defs>
          <linearGradient id="shade" x1="0" x2="1" y1="0" y2=".15">
            <stop offset="0" stopColor="#bbb" stopOpacity="0" />
            <stop offset=".6" stopColor="#8f8f8f" stopOpacity=".55" />
            <stop offset="1" stopColor="#777" stopOpacity=".65" />
          </linearGradient>
          <filter id="soft" x="-20%" y="-60%" width="140%" height="220%">
            <feGaussianBlur stdDeviation="7" />
          </filter>
        </defs>
        <path d="M0 62Q90 32 180 28L270 22V80H0Z" fill="url(#shade)" filter="url(#soft)" />
      </svg>
    </div>
  );
}

function PhotoMessage() {
  return (
    <div className="flex h-[470px] w-[518px] shrink-0 rounded-t-[12px] bg-white px-2 pt-2 shadow-[0_1px_2px_rgba(0,0,0,0.22)]">
      <div className="flex w-full flex-col overflow-hidden rounded-t-[6px]">
        <div className="relative flex h-6 shrink-0 items-start whitespace-nowrap bg-[#15825c] text-[17px] leading-[17px] text-[#d8ebe4]">
          <span className="ml-[14px] h-[2px] w-[14px] bg-[#5fb395]" />
          <span className="-mt-[13px] ml-[2px] w-[28px] text-[18px] font-medium">A-Z</span>
          <span className="-mt-[13px] ml-[71px] w-[58px] font-medium">Ao Vivo</span>
          <span className="ml-[42px] -mt-[3px] w-[43px] font-['DejaVu_Sans'] text-[20px] font-bold leading-[20px] text-[#f7e617]">365</span>
          <span className="-mt-[13px] ml-[26px] w-[123px]">Minhas Apostas</span>
          <svg className="ml-auto mr-[16px]" width="40" height="15" viewBox="0 0 40 15" fill="none" stroke="#b9dfd1" strokeWidth="1.800">
            <path d="M1 0A20 20 0 0 0 39 0M7 6Q10 0 16 0M24 0Q31 0 34 6" />
          </svg>
          <span className="absolute bottom-0 left-[129px] h-[4px] w-[59px] bg-[#f1dc2e]" />
        </div>
        <div className="flex min-h-0 flex-1">
          <SportColumn />
          <AccountPanel />
        </div>
      </div>
    </div>
  );
}

function Chat() {
  return (
    <div className="relative flex h-[1010px] shrink-0 flex-col items-start gap-1 overflow-hidden pl-[35px]">
      <div className="mb-[13px] ml-[362px] flex h-[51px] w-[288px] shrink-0 items-start rounded-b-[12px] bg-[#e1ffc7] pl-4 shadow-[0_1px_2px_rgba(0,0,0,0.28)]">
        <span className="mt-[3px] w-[146px] whitespace-nowrap text-[32px] leading-[32px] text-[#14190f]">ta esperto</span>
        <span className={`${timeBase} mt-[16px] ml-[14px] text-[#8ba07c]`}>18:48</span>
        <svg className="ml-[7px] mt-[16px]" width="32" height="20" viewBox="0 0 32 20" fill="none" stroke="#3fb5e8" strokeWidth="3">
          <path d="M1 11 8 18 21 1M15 17 17 18.500 31 1" />
        </svg>
      </div>
      <EmojiMessage time="18:48" tail><SweatFace /></EmojiMessage>
      <EmojiMessage time="18:48"><div className="ml-px"><CheckEmoji size={67} /></div></EmojiMessage>
      <EmojiMessage time="18:48"><div className="ml-px"><HandsEmoji size={68} /></div></EmojiMessage>
      <div className={`${bubbleBase} h-[60px] w-[167px] shrink-0 justify-between`}>
        <span className="mt-[12px] text-[33px] leading-[33px] tracking-[-0.8px] text-[#141414]">Top</span>
        <span className={`${timeBase} mt-[25px] text-[#999]`}>21:19</span>
      </div>
      <div className={`${bubbleBase} h-[83px] w-[279px] shrink-0 justify-between`}>
        <div className="ml-[0.5px] flex gap-[3px] pt-[14px]">
          <HandsEmoji size={52} />
          <CheckEmoji size={52} />
          <HandsEmoji size={52} />
        </div>
        <span className={`${timeBase} self-end pb-[9px] text-[#999]`}>21:20</span>
      </div>
      <div className="flex items-start">
        <PhotoMessage />
        <div className="ml-4 mt-[227px] flex size-16 items-center justify-center rounded-full bg-[#6b605a]/30">
          <svg width="33" height="25" viewBox="0 0 33 25" fill="#fff">
            <path d="M19 0 33 12 19 23.500V17Q7 15 .5 25 1 7 19 6.500Z" />
          </svg>
        </div>
      </div>
      <div className="absolute left-[631px] top-[914px] flex size-[66px] items-center justify-center rounded-full bg-[#f9f8f7] shadow-[0_1px_3px_rgba(0,0,0,0.18)]">
        <svg className="mt-1" width="24" height="22" viewBox="0 0 24 22" fill="none" stroke="#5c5c5c" strokeWidth="3">
          <path d="M1 1.500 12 10 23 1.500M1 11.500 12 20 23 11.500" />
        </svg>
      </div>
    </div>
  );
}

function Composer() {
  return (
    <div className="relative flex h-[110px] shrink-0 items-start pl-[10px] pr-[9px]">
      <div className="mt-2 flex h-[91px] w-[597px] items-center rounded-full bg-white shadow-[0_1px_2px_rgba(0,0,0,0.25)]">
        <svg className="ml-[21px]" width="43" height="43" viewBox="0 0 43 43">
          <circle cx="21.500" cy="21.500" r="19.800" fill="none" stroke="#868b90" strokeWidth="3" />
          <ellipse cx="16" cy="16.500" rx="2.700" ry="3.700" fill="#868b90" />
          <ellipse cx="27" cy="16.500" rx="2.700" ry="3.700" fill="#868b90" />
          <path d="M10 23.500H33Q30 34.500 21.500 34.500T10 23.500ZM13.500 26.500Q21.500 29.500 29.500 26.500Z" fill="#868b90" fillRule="evenodd" />
        </svg>
        <span className="ml-[22px] w-[329px] whitespace-nowrap pt-[3px] text-[36px] leading-[36px] text-[#a3a3a3] tracking-[-0.1px]">Digite uma mensa...</span>
        <svg className="ml-[27px]" width="42" height="38" viewBox="276 134 126 114" fill="none" stroke="#8b8e91" strokeWidth="8" strokeLinecap="butt">
          <path d="M340 147 389 196Q402 214 389 233 371 248 350 236L286 174Q273 160 285 146 300 134 315 147L359 190Q369 202 360 210 351 216 341 207L311 177" />
        </svg>
        <svg className="ml-[47px]" width="40" height="36" viewBox="0 0 40 36">
          <path d="M12 5 14.500 1.500Q15.500 0 17.500 0H22.500Q24.500 0 25.500 1.500L28 5H36Q40 5 40 9V32Q40 36 36 36H4Q0 36 0 32V9Q0 5 4 5Z" fill="#737373" />
          <circle cx="20" cy="20" r="8.500" fill="none" stroke="#fff" strokeWidth="3" />
        </svg>
      </div>
      <div className="ml-auto mt-[7px] flex size-[94px] items-center justify-center rounded-full bg-[#00897b] shadow-[0_1px_3px_rgba(0,0,0,0.3)]">
        <svg width="30" height="41" viewBox="0 0 30 41">
          <rect x="9" width="12" height="25" rx="6" fill="#fff" />
          <path d="M2 19Q2 31 15 31.500 28 31 28 19M15 31V41" fill="none" stroke="#fff" strokeWidth="4" />
        </svg>
      </div>
    </div>
  );
}

export default function App() {
  return (
    <div className="relative flex h-[1280px] w-[720px] flex-col overflow-hidden bg-[linear-gradient(180deg,#e9eae6_0px,#ebebe6_260px,#eeeae5_360px,#efe7df_480px,#efe6dd_100%)] font-['Roboto',sans-serif]">
      <Wallpaper />
      <div className="relative z-10 flex flex-col">
        <StatusBar />
        <AppBar />
      </div>
      <Chat />
      <Composer />
    </div>
  );
}
